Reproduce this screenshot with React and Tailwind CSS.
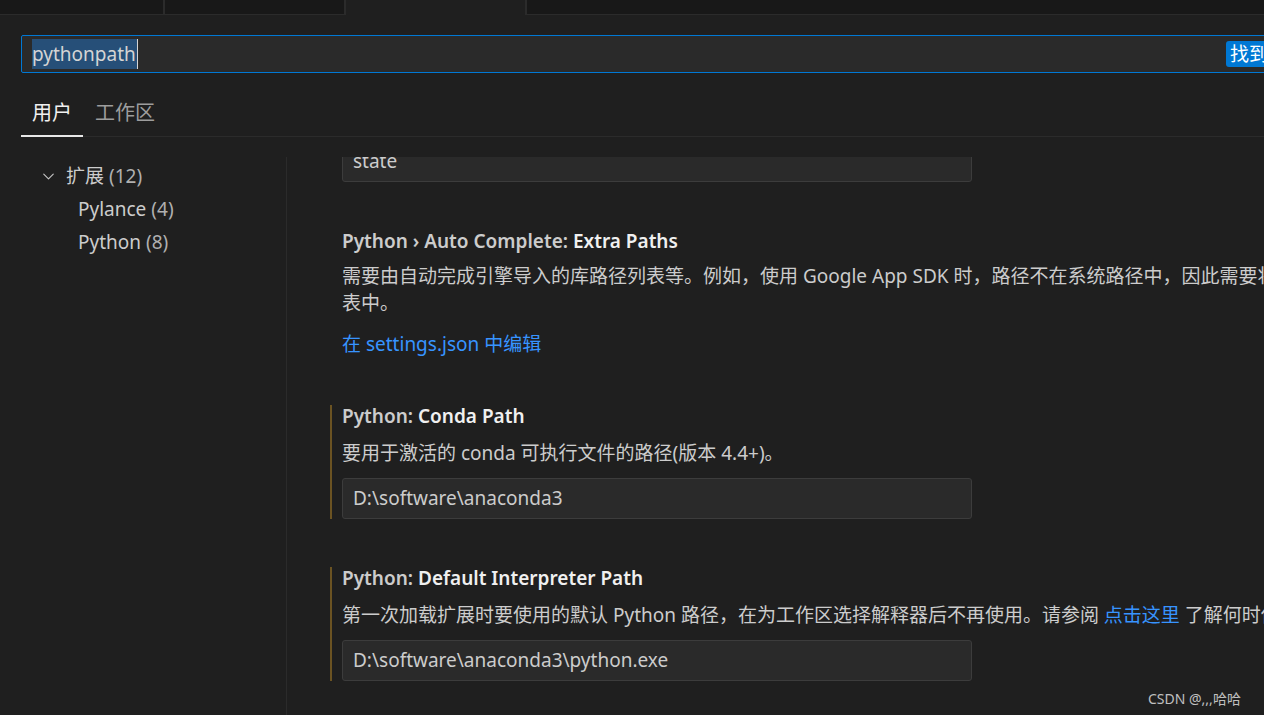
import React from 'react';
import { ChevronDown } from 'lucide-react';

const font = { fontFamily: '"Noto Sans", "Noto Sans CJK SC", sans-serif' };

const SettingInput = ({ value, className = '' }) => (
  <div className={`w-[630px] h-[41px] bg-[#2a2a2a] border border-[#3c3c3c] rounded-[3px] flex items-center pl-[10px] text-[#cccccc] ${className}`}>
    {value}
  </div>
);

const Title = ({ category, name }) => (
  <div className="leading-[22px] font-semibold whitespace-nowrap">
    <span className="text-[#cccccc]">{category}</span>
    <span className="text-[#f0f0f0]">{name}</span>
  </div>
);

const App = () => {
  return (
    <div
      className="relative w-[1264px] h-[715px] bg-[#1f1f1f] overflow-hidden text-[19px] text-[#cccccc]"
      style={font}
    >
      {/* editor tabs */}
      <div className="flex h-[15px] bg-[#181818]">
        <div className="w-[163px] border-b border-[#2b2b2b]" />
        <div className="w-[2px] bg-[#2b2b2b]" />
        <div className="w-[179px] border-b border-[#2b2b2b]" />
        <div className="w-[2px] bg-[#2b2b2b]" />
        <div className="w-[179px] bg-[#1f1f1f]" />
        <div className="w-[2px] bg-[#2b2b2b]" />
        <div className="flex-1 border-b border-[#2b2b2b]" />
      </div>

      {/* search */}
      <div className="pl-[21px] pt-[20px]">
        <div className="w-[1400px] h-[38px] bg-[#2a2a2a] border border-[#0078d4] rounded-[2px] flex items-center pl-[10px]">
          <div className="w-[1194px] shrink-0 flex">
            <span className="bg-[#264f78] text-[#d4d4d4] leading-[30px] pr-[1px] border-r border-[#d4d4d4]">pythonpath</span>
          </div>
          <div className="shrink-0 bg-[#0078d4] text-white rounded-[3px] h-[26px] px-[4px] flex items-center whitespace-nowrap">
            找到 20 个设置
          </div>
        </div>
      </div>

      {/* scope tabs */}
      <div className="ml-[21px] flex items-end h-[64px] border-b border-[#2b2b2b] text-[20px]">
        <div className="px-[11px] pb-[7px] text-[#f0f0f0] border-b-2 border-[#e7e7e7] -mb-[1px]">用户</div>
        <div className="px-[12px] pb-[8px] text-[#9d9d9d]">工作区</div>
      </div>

      {/* body */}
      <div className="flex mt-[20px] h-[560px]">
        {/* tree */}
        <div className="w-[286px] shrink-0 pt-[3px]">
          <div className="flex items-center h-[33px] pl-[39px]">
            <ChevronDown size={19} strokeWidth={1.4} className="text-[#c5c5c5]" />
            <span className="ml-[8px]">扩展 <span className="text-[#b0b0b0]">(12)</span></span>
          </div>
          <div className="flex items-center h-[33px] pl-[78px]">Pylance <span className="ml-[5px] text-[#b0b0b0]">(4)</span></div>
          <div className="flex items-center h-[33px] pl-[78px]">Python <span className="ml-[5px] text-[#b0b0b0]">(8)</span></div>
        </div>

        {/* settings list */}
        <div className="flex-1 border-l border-[#2b2b2b] overflow-hidden">
          <div className="-mt-[16px] pl-[55px]">
            <SettingInput value="state" />

            <div className="mt-[48px]">
              <Title category="Python › Auto Complete: " name="Extra Paths" />
              <div className="mt-[11px] leading-[27px] whitespace-nowrap">
                <div>需要由自动完成引擎导入的库路径列表等。例如，使用 Google App SDK 时，路径不在系统路径中，因此需要将其添加到列</div>
                <div>表中。</div>
              </div>
              <div className="mt-[14px] leading-[27px] text-[#3794ff]">在 settings.json 中编辑</div>
            </div>

            <div className="mt-[47px] -ml-[12px] pl-[10px] border-l-2 border-[#6b5322]">
              <Title category="Python: " name="Conda Path" />
              <div className="mt-[13px] leading-[27px] whitespace-nowrap">要用于激活的 conda 可执行文件的路径(版本 4.4+)。</div>
              <SettingInput value="D:\software\anaconda3" className="mt-[11px]" />
            </div>

            <div className="mt-[48px] -ml-[12px] pl-[10px] border-l-2 border-[#6b5322]">
              <Title category="Python: " name="Default Interpreter Path" />
              <div className="mt-[13px] leading-[27px] whitespace-nowrap">
                第一次加载扩展时要使用的默认 Python 路径，在为工作区选择解释器后不再使用。请参阅 <span className="text-[#3794ff]">点击这里</span> 了解何时使用此设置。
              </div>
              <SettingInput value="D:\software\anaconda3\python.exe" className="mt-[11px]" />
            </div>
          </div>
        </div>
      </div>

      {/* watermark */}
      <div className="absolute left-[1148px] top-[690px] text-[14px] text-[#c0c0c0] leading-[18px]">CSDN @,,,哈哈</div>
    </div>
  );
};

export default App;
